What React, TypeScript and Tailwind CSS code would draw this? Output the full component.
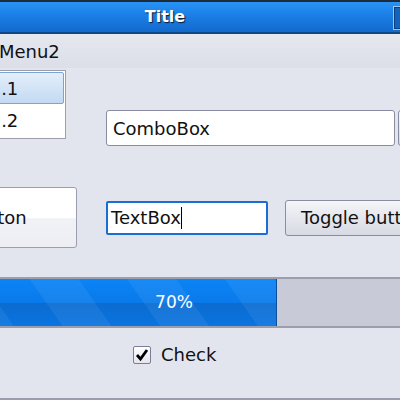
const font = "font-['DejaVu_Sans',sans-serif]";

const ListItem = ({ label, selected }: { label: string; selected?: boolean }) => (
  <div
    className={
      selected
        ? "h-[32px] flex items-center pl-[6px] rounded-[2px] border border-[#7da3d3] bg-[linear-gradient(to_bottom,#e3eefa,#c3daf2)]"
        : "h-[32px] flex items-center pl-[7px]"
    }
  >
    {label}
  </div>
);

export default function App() {
  return (
    <div className={`w-[400px] h-[400px] overflow-hidden bg-[#e3e5ee] text-[18px] text-[#111] ${font}`}>
      <div className="ml-[-84px] w-[516px] h-[400px] flex flex-col border-b-2 border-[#9a9cab]">
        {/* title bar */}
        <div className="h-[34px] shrink-0 flex items-center border-t-2 border-t-[#1d2a3a] border-b-2 border-b-[#0f4684] bg-[linear-gradient(to_bottom,#2a92f4,#1a7fe6_45%,#1469cc)] relative">
          <div className="flex-1 pr-[18px] text-center text-white font-bold text-[16px] [text-shadow:1px_1px_1px_#0a1a30]">
            Title
          </div>
          <div className="absolute left-[477px] top-[4px] w-[26px] h-[24px] border border-[#9cc4f0] bg-[#1462c0] shadow-[inset_0_0_0_1px_#0d3f7c]" />
        </div>

        {/* menu bar */}
        <div className="h-[34px] shrink-0 flex items-center gap-[14px] pl-[8px] bg-[linear-gradient(to_bottom,#e6e8f0,#dcdee8)]">
          <span>Menu1</span>
          <span>Menu2</span>
        </div>

        {/* row 1 */}
        <div className="flex items-start mt-[2px] h-[76px]">
          <div className="ml-[18px] w-[132px] h-[69px] border border-[#9c9eb0] bg-white p-[1px] flex flex-col">
            <ListItem label="Item 1.1" selected />
            <ListItem label="Item 1.2" />
          </div>
          <div className="ml-[40px] mt-[40px] w-[289px] h-[36px] rounded-[3px] border border-[#8a8ca2] bg-white flex items-center pl-[6px]">
            ComboBox
          </div>
          <div className="ml-[3px] mt-[40px] w-[30px] h-[36px] rounded-[3px] border border-[#8a8ca2] bg-[linear-gradient(to_bottom,#f6f7fa,#d6d8e2)]" />
        </div>

        {/* row 2 */}
        <div className="flex items-center mt-[41px] h-[61px]">
          <div className="w-[161px] h-[61px] shrink-0 rounded-[3px] border border-[#9c9eb0] bg-[linear-gradient(to_bottom,#ffffff,#ffffff_50%,#f1f2f6_52%,#eceef3)] flex items-center justify-center">
            Button
          </div>
          <div className="ml-[29px] w-[162px] h-[34px] shrink-0 rounded-[2px] border-2 border-[#1a6ed2] bg-white flex items-center pl-[3px]">
            <span>TextBox</span>
            <span className="w-[1px] h-[22px] bg-black" />
          </div>
          <div className="ml-[17px] w-[150px] h-[36px] shrink-0 rounded-[3px] border border-[#8a8ca2] bg-[linear-gradient(to_bottom,#f4f5f8,#e6e7ee_50%,#d8dae3)] flex items-center pl-[15px] whitespace-nowrap">
            Toggle button
          </div>
        </div>

        {/* progress bar */}
        <div className="mt-[29px] h-[51px] shrink-0 border-y-2 border-[#9c9eac] bg-[#c8cad8] flex relative">
          <div className="w-[70%] h-full border-r border-[#0a4f9e] bg-[repeating-linear-gradient(55deg,rgba(255,255,255,0)_0px,rgba(255,255,255,0)_40px,rgba(255,255,255,0.06)_40px,rgba(255,255,255,0.06)_80px),linear-gradient(to_bottom,#0a84f6,#0a7aea_50%,#0b6bd0_50%,#0a74e0)]" />
          <div className="absolute inset-0 flex items-center justify-center text-white text-[17px]">70%</div>
        </div>

        {/* checkbox */}
        <div className="flex items-center mt-[13px] ml-[217px]">
          <div className="w-[18px] h-[18px] border border-[#7c7e96] rounded-[2px] bg-[linear-gradient(to_bottom,#ffffff,#e4e6ee)] flex items-center justify-center">
            <svg width="14" height="14" viewBox="0 0 14 14">
              <path d="M2 7 L5.5 11 L12 2" fill="none" stroke="#000" strokeWidth="2.8" strokeLinejoin="miter" />
            </svg>
          </div>
          <span className="ml-[10px]">Check</span>
        </div>
      </div>
    </div>
  );
}
